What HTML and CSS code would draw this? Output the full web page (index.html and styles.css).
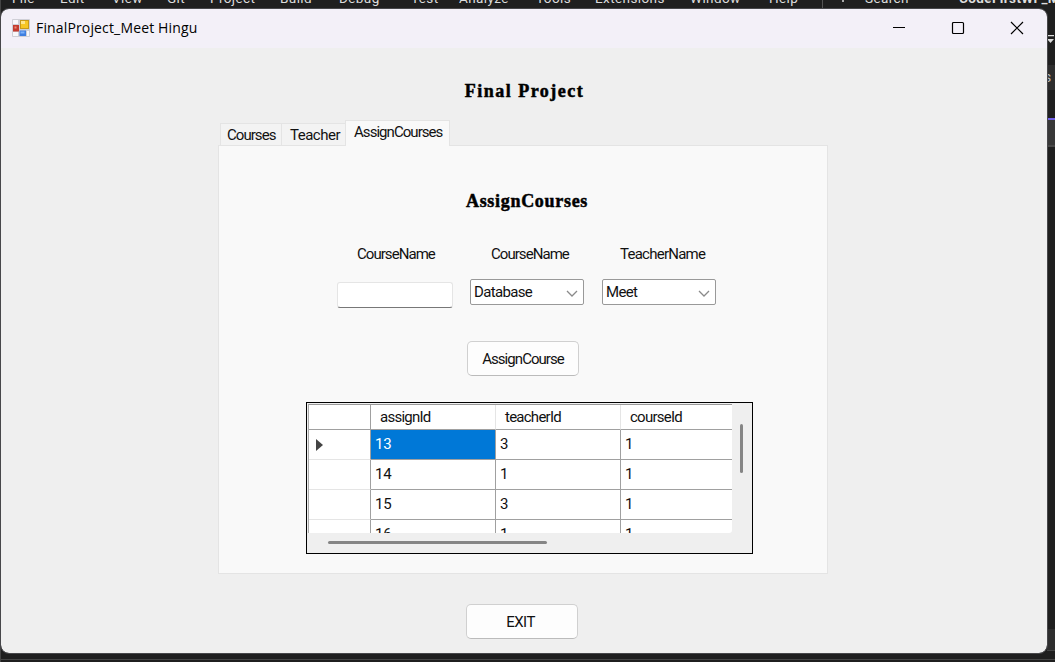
FILE: index.html
```
<!DOCTYPE html>
<html lang="en">
<head>
<meta charset="utf-8">
<title>FinalProject_Meet Hingu</title>
<link rel="stylesheet" href="styles.css">
</head>
<body>
<div class="desktop">
  <div class="ide">
    <nav class="menu">
      <span>File</span><span>Edit</span><span>View</span><span>Git</span><span>Project</span><span>Build</span><span>Debug</span><span>Test</span><span>Analyze</span><span>Tools</span><span>Extensions</span><span>Window</span><span>Help</span><span class="find"><i></i></span><span>Search</span><span class="solution">CodeFirstWF_M</span>
    </nav>
    <div class="strip toolbar"><svg width="9" height="9" viewBox="0 0 9 9"><path d="M0 0h7v1.2H0zM0 4h7L3.5 8z" fill="#ddd"/></svg></div>
    <div class="strip bar"><span>s</span></div>
    <div class="strip gap"></div>
    <div class="strip tabline"></div>
    <div class="strip rest"></div>
    <div class="strip low"></div>
    <div class="strip foot"></div>
  </div>
  <div class="marks"><i class="m1"></i><i class="m2"></i><i class="m3"></i></div>

  <main class="window">
    <header class="titlebar">
      <svg class="appicon" width="18" height="18" viewBox="0 0 18 18">
        <rect width="18" height="18" rx="1" fill="#cfcfd6"/>
        <rect x="1" y="1" width="5" height="4" fill="#f8f8fb"/>
        <rect x="1" y="13" width="5" height="4" fill="#f8f8fb"/>
        <rect x="15" y="12" width="2" height="5" fill="#f8f8fb"/>
        <rect x="1" y="6" width="6" height="6.5" fill="#c33c30"/>
        <rect x="2.5" y="7.5" width="2" height="2" fill="#f08a78"/>
        <rect x="8" y="1" width="9" height="9" fill="#c99a18"/>
        <rect x="9" y="2" width="7" height="7" fill="#f7c624"/>
        <rect x="9" y="2" width="4" height="3" fill="#ffe68a"/>
        <rect x="7.5" y="11.5" width="6.500" height="5.500" fill="#3f7fe0"/>
        <rect x="8.500" y="12.500" width="4" height="2" fill="#7db2fa"/>
      </svg>
      <span class="caption">FinalProject_Meet Hingu</span>
      <div class="controls">
        <svg width="14" height="14" viewBox="0 0 14 14"><path d="M1 6.5h12" stroke="#000" fill="none"/></svg>
        <svg width="14" height="14" viewBox="0 0 14 14"><rect x="1.500" y="1.500" width="11" height="11" rx="1" stroke="#000" stroke-width="1.200" fill="none"/></svg>
        <svg width="14" height="14" viewBox="0 0 14 14"><path d="M1 1l12 12M13 1L1 13" stroke="#000" stroke-width="1.200" fill="none"/></svg>
      </div>
    </header>

    <h1 class="display title">Final Project</h1>

    <section class="tabs">
      <div class="tablist">
        <div class="tab t1"><span>Courses</span></div>
        <div class="tab t2"><span>Teacher</span></div>
        <div class="tab active"><span>AssignCourses</span></div>
      </div>
      <div class="panel">
        <h2 class="display subtitle">AssignCourses</h2>
        <div class="fields">
          <label class="field"><span class="lab">CourseName</span><span class="textbox"></span></label>
          <label class="field"><span class="lab l2">CourseName</span><span class="combo"><span class="w-db">Database</span><svg width="12" height="7" viewBox="0 0 12 7"><path d="M1 1l5 5 5-5" fill="none" stroke="#8a8a8a" stroke-width="1.300"/></svg></span></label>
          <label class="field"><span class="lab l3">TeacherName</span><span class="combo"><span class="w-meet">Meet</span><svg width="12" height="7" viewBox="0 0 12 7"><path d="M1 1l5 5 5-5" fill="none" stroke="#8a8a8a" stroke-width="1.300"/></svg></span></label>
        </div>
        <div class="button assign"><span>AssignCourse</span></div>
        <div class="gridview">
          <div class="cells">
            <div class="row head"><b></b><span>assignId</span><span>teacherId</span><span>courseId</span></div>
            <div class="row"><b><svg width="7" height="12" viewBox="0 0 7 12"><path d="M0 0l7 6-7 6z" fill="#444"/></svg></b><span class="selected">13</span><span>3</span><span>1</span></div>
            <div class="row"><b></b><span>14</span><span>1</span><span>1</span></div>
            <div class="row"><b></b><span>15</span><span>3</span><span>1</span></div>
            <div class="row"><b></b><span>16</span><span>1</span><span>1</span></div>
          </div>
          <div class="vscroll"></div>
          <div class="hscroll"></div>
        </div>
      </div>
    </section>

    <div class="button exit"><span>EXIT</span></div>
  </main>
</div>
</body>
</html>
```
FILE: styles.css
```
* { box-sizing: border-box; }
body { margin: 0; background: #1f1f1f; font: 15px/20px Roboto, sans-serif; letter-spacing: -.95px; color: #111; }
h1, h2 { margin: 0; }
.desktop { position: relative; width: 1055px; height: 662px; overflow: hidden; background: #1f1f1f; }

/* IDE behind the form */
.ide { display: flex; flex-direction: column; height: 662px; }
.menu {
  display: grid; height: 8px; overflow: hidden; padding-left: 12px; flex: none;
  grid-template-columns: 48px 52px 55px 43px 70px 59px 72px 48px 77px 59px 95px 79px 53px 43px 94px 120px;
  color: #ddd; font-size: 13.500px; letter-spacing: .4px; white-space: nowrap;
}
.menu span { height: 20px; margin-top: -12px; line-height: 20px; }
.find { border-left: 1px solid #555; }
.find i { display: block; width: 2px; height: 3px; margin: 11px 0 0 19px; background: #aaa; }
.solution { font-weight: bold; }
.strip { flex: none; align-self: flex-end; width: 8px; }
.toolbar { height: 57px; padding-top: 27px; }
.toolbar svg { display: block; }
.bar { height: 25px; background: #2e2e2e; color: #bbb; line-height: 25px; font-size: 14px; text-indent: -3px; }
.gap { height: 28px; }
.tabline { height: 29px; border-top: 2px solid #7160e8; border-bottom: 2px solid #484848; background: #383838; }
.rest { height: 482px; }
.low { height: 22px; background: #2e2e2e; border-bottom: 1px solid #444; }
.foot { flex: 1; }
.desktop::after { content: ""; position: absolute; left: 0; right: 0; bottom: 2px; border-top: 1px solid #444; }
.marks { position: absolute; left: 0; top: 0; width: 1px; height: 662px; background: #444; }
.marks i { position: absolute; left: 0; width: 1px; }
.m1 { top: 327px; height: 17px; background: #3a86bd; }
.m2 { top: 25px; height: 13px; background: #3f7896; }
.m3 { top: 634px; height: 7px; background: #aaa; }

/* Form window */
.window {
  position: absolute; left: 1px; top: 9px; width: 1046px; height: 644px;
  border-radius: 8px; overflow: hidden; background: #efefef; outline: 1px solid #47474a;
}
.titlebar { display: flex; align-items: center; height: 39px; padding: 0 23px 2px 11px; background: #f3f0f8; }
.caption { flex: 1; margin-left: 6px; font: 14px/20px "Open Sans", sans-serif; color: #000; letter-spacing: .15px; }
.controls { display: flex; gap: 45px; }
.controls svg { display: block; }
.display { font: bold 18px/22px "Liberation Serif", serif; color: #000; -webkit-text-stroke: .5px #000; text-align: center; white-space: nowrap; }
.title { width: 121px; margin: 32px 0 0 463px; letter-spacing: 1.500px; }
.tabs { width: 610px; margin: 17px 0 0 217px; padding-top: 1px; }
.tablist { display: flex; align-items: flex-end; height: 25px; padding-left: 2px; }
.tab { height: 22px; border: 1px solid #e4e4e4; border-bottom: 0; background: #f3f3f3; line-height: 22px; white-space: nowrap; }
.t1 { width: 62px; padding-left: 6px; }
.t2 { width: 63px; padding-left: 8px; border-left: 0; border-right: 0; letter-spacing: -.5px; }
.active { position: relative; z-index: 1; width: 105px; height: 26px; margin-bottom: -1px; padding-left: 8px; background: #f9f9f9; line-height: 23px; }
.panel { height: 429px; border: 1px solid #e4e4e4; background: #f9f9f9; padding: 44px 0 0 87px; }
.subtitle { width: 124px; margin-left: 159px; letter-spacing: .7px; }
.fields { display: flex; gap: 17px; margin: 32px 0 0 32px; }
.field { display: flex; flex-direction: column; width: 115px; }
.lab { height: 20px; margin-left: 19px; white-space: nowrap; }
.l2 { margin-left: 21px; }
.l3 { margin-left: 18px; letter-spacing: -.75px; }
.textbox { height: 26px; width: 116px; margin: 18px 0 0 -1px; border: 1px solid #e5e5e5; border-bottom: 1px solid #777; border-radius: 3px; background: #fff; }
.combo { display: flex; justify-content: space-between; align-items: center; height: 26px; width: 114px; margin-top: 15px; padding: 0 5px 0 3px; border: 1px solid #999; border-radius: 2px; background: #fff; letter-spacing: -.65px; }
.combo svg { margin-top: 2px; }
.button { display: flex; align-items: center; justify-content: center; width: 112px; height: 35px; border: 1px solid #d0d0d0; border-bottom-color: #bbb; border-radius: 5px; background: #fdfdfd; }
.assign { margin: 33px 0 0 161px; }
.exit { margin: 30px 0 0 465px; padding-right: 3px; letter-spacing: -.5px; }
.gridview {
  display: grid; grid-template: 129px 20px / 424px 20px; width: 447px; height: 152px; margin-top: 26px;
  border: 1px solid #000; background: #efefef; padding: 1px; letter-spacing: -.75px;
}
.cells { overflow: hidden; background: #fff; border-top: 1px solid #999; border-left: 1px solid #aaa; border-radius: 0 0 3px 0; }
.row { display: grid; grid-template-columns: 62px 125px 125px 112px; height: 30px; }
.row b { border-right: 1px solid #a0a0a0; border-bottom: 1px solid #e5e5e5; padding: 9px 0 0 7px; }
.row svg { display: block; }
.row span { padding-left: 4px; line-height: 29px; border-right: 1px solid #a0a0a0; border-bottom: 1px solid #a0a0a0; letter-spacing: -.3px; }
.head { height: 25px; }
.head span { padding-left: 9px; line-height: 24px; border-right-color: #e5e5e5; letter-spacing: -.75px; }
.head b { border-bottom-color: #a0a0a0; }
.row .selected { background: #0078d7; color: #fff; }
.vscroll { width: 3px; height: 49px; margin: 20px 0 0 8px; border-radius: 2px; background: #858585; }
.hscroll { width: 219px; height: 3px; margin: 8px 0 0 20px; border-radius: 2px; background: #858585; }
```
